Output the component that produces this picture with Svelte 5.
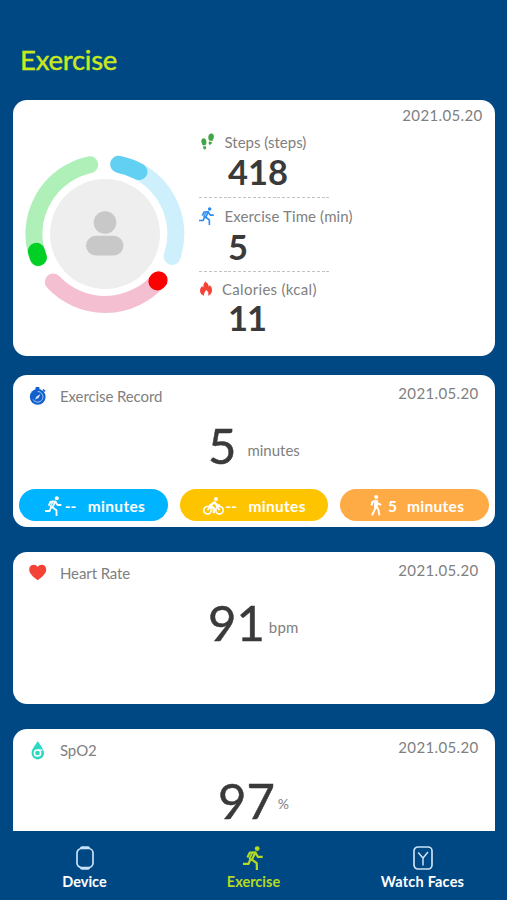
<script>
  const date = '2021.05.20';
  const stats = [
    { icon: 'steps', label: 'Steps (steps)', value: '418' },
    { icon: 'run', label: 'Exercise Time (min)', value: '5' },
    { icon: 'flame', label: 'Calories (kcal)', value: '11' }
  ];
  const pills = [
    { kind: 'run', value: '--' },
    { kind: 'bike', value: '--' },
    { kind: 'walk', value: '5' }
  ];
</script>

{#snippet runner(size)}
  <svg width={size * 0.84} height={size} viewBox="0 0 21 25" fill="none" stroke="currentColor" stroke-width="2.3" stroke-linejoin="round">
    <circle cx="14.800" cy="2.700" r="2.500" fill="currentColor" stroke="none" />
    <path d="M4.600 12 7 7l6-.3-3.700 7.500 5 3.600.2 7.200" />
    <path d="M12.800 7l2.800 4.300h4.900M7.800 13.500 5.800 18.700H0" />
    <path d="M9.500 7.500 6.900 13.200l2.800 1.700" stroke-width="1.800" />
  </svg>
{/snippet}

<main>
  <header><h1>Exercise</h1></header>

  <div class="cards">
    <section class="card summary">
      <svg class="ring" width="162" height="162" viewBox="-81 -81 162 162" fill="none" stroke-width="17" stroke-linecap="round">
        <circle r="55" fill="#eeeeee" />
        <circle cx="0" cy="-11.5" r="11.3" fill="#c8c8c8" />
        <rect x="-19" y="1.8" width="37.5" height="19.6" rx="9.8" fill="#c8c8c8" />
        <path d="M-15.3-69.3A71 71 0 0 0-67 23.8" stroke="#aef0b8" />
        <path d="M-68.6 17.3-66.6 23.5" stroke="#00cf25" />
        <path d="M13.7-69.7A71 71 0 0 1 67.2 22.4" stroke="#cef0fc" />
        <path d="M13.7-69.7A71 71 0 0 1 34-62.4" stroke="#62d0f2" />
        <path d="M-51.7 48A71 71 0 0 0 53 46.8" stroke="#f4bfd0" />
        <path d="M52.4 47.4 53.6 46.2" stroke="#ff0000" stroke-width="18" />
      </svg>
      <div class="stats">
        {#each stats as s}
          <div class="stat {s.icon}">
            <div class="name">
              <span class="glyph">
                {#if s.icon === 'steps'}
                  <svg width="16" height="18" viewBox="-1 0 14 17" fill="#43a647">
                    <path d="M.6 8C.5 6.200 1.400 5 2.800 4.900c1.500 0 2.600 1.500 2.700 3.500 0 1.200-.5 2-.7 3l-2.900.4C1.600 10.500.7 9.400.6 8z" />
                    <path d="M2.200 12.800 5 12.400c.4 1.700.1 3-1 3.200-1.100.1-1.700-1-1.800-2.800z" />
                    <path d="M7.200 4c.1-2 1.300-3.700 3-3.500 1.800.1 2.500 1.700 2.300 3.500-.2 1.400-1 2.300-1.400 3.500L8 7C7.800 6 7.100 5.200 7.200 4z" />
                    <path d="M7.800 8l2.900.5c-.3 1.700-1 2.800-2.100 2.600C7.500 10.900 7.400 9.600 7.800 8z" />
                  </svg>
                {:else if s.icon === 'run'}
                  {@render runner(18)}
                {:else}
                  <svg width="14" height="16" viewBox="0 0 14 16" fill="#f44336">
                    <path d="M6.300.4c3 1.900 3.400 3.800 3.300 5.300.8-.3 1-.9 1-1.600C12.500 5.800 13 7.600 13 9.200c0 2.900-1.600 4.700-3.900 5.500.9-2.500.1-4.300-2.300-5.900.1 2-2.300 2.800-1.600 5.900C2.700 14.100 1 12.300 1 9.500c0-2.400 1.300-3.600 2.500-4.800 0 1 .1 1.500.8 1.900C4.500 4 4.500 2.300 6.300.4z" />
                  </svg>
                {/if}
              </span>
              <span class="label">{s.label}</span>
            </div>
            <div class="num">{s.value}</div>
          </div>
        {/each}
      </div>
      <time>{date}</time>
    </section>

    <section class="card record">
      <div class="top">
        <svg width="18" height="18" viewBox="0 0 18 18">
          <rect x="6.500" y="0" width="4" height="3" rx=".8" fill="#1260cc" />
          <path d="M14 2.500l2 2" stroke="#1260cc" stroke-width="1.600" />
          <circle cx="8.700" cy="9.800" r="7.900" fill="#1260cc" />
          <path d="M8.700 4.500a5.300 5.300 0 1 1-4.600 8" fill="none" stroke="#a9c9f5" stroke-width="1" />
          <path d="M6 12.500l1.500-3 4-2.500-2 4z" fill="#d8e8ff" />
        </svg>
        <span class="title">Exercise Record</span>
        <time>{date}</time>
      </div>
      <div class="reading"><b>5</b><span>minutes</span></div>
      <div class="pills">
        {#each pills as p}
          <div class="pill {p.kind}">
            {#if p.kind === 'run'}
              {@render runner(20)}
            {:else if p.kind === 'bike'}
              <svg width="21" height="18" viewBox="0 0 21 18" fill="none" stroke="#fff" stroke-width="1.600">
                <circle cx="4.500" cy="13.200" r="3.700" />
                <circle cx="16.500" cy="13.200" r="3.700" />
                <circle cx="13" cy="2" r="2" fill="#fff" stroke="none" />
                <path d="M12 4.800 7 8.500l3.800 2.700v5M11.500 5.300l2.300 3h3.400" stroke-width="2.300" stroke-linejoin="round" />
                <path d="M4.500 13.200 7.500 9M16.500 13.200l-3-4.500" />
              </svg>
            {:else}
              <svg width="12" height="21" viewBox="0 0 12 21" fill="none" stroke="#fff" stroke-width="1.900" stroke-linejoin="round">
                <circle cx="6.200" cy="2.100" r="2" fill="#fff" stroke="none" />
                <path d="M1.500 10.500 2.300 7 6 5.600l2.200 3 3 1.300M6 5.500v6.500L2 20.300M6.600 11.500l2 3.600.8 5.200" />
                <path d="M5 6h2v6H5z" fill="#fff" />
              </svg>
            {/if}
            <span class="amount">{p.value}</span>
            <span class="unit">minutes</span>
          </div>
        {/each}
      </div>
    </section>

    <section class="card heart">
      <div class="top">
        <svg width="18" height="17" viewBox="0 0 18 17" fill="#f44336">
          <path d="M8.700 16.200C3.500 12.300.2 9.400.2 5.500.2 2.600 2.300.8 4.600.8c1.700 0 3.200.8 4.100 2.300C9.600 1.600 11.100.8 12.800.8c2.300 0 4.400 1.800 4.400 4.700 0 3.900-3.300 6.800-8.500 10.700z" />
        </svg>
        <span class="title">Heart Rate</span>
        <time>{date}</time>
      </div>
      <div class="reading"><b>91</b><span>bpm</span></div>
    </section>

    <section class="card spo">
      <div class="top">
        <svg width="18" height="19" viewBox="0 0 18 19">
          <path d="M8.800 0c2.200 4.300 6.200 7.900 6.200 12.100 0 3.600-2.700 6.300-6.200 6.300s-6.200-2.700-6.200-6.300C2.600 7.900 6.600 4.300 8.800 0z" fill="#2ed9c3" />
          <circle cx="8.500" cy="12" r="3.100" fill="none" stroke="#fff" stroke-width="1.500" />
          <path d="M9 9h4.500" stroke="#fff" stroke-width="1.200" />
        </svg>
        <span class="title">SpO2</span>
        <time>{date}</time>
      </div>
      <div class="reading"><b>97</b><span>%</span></div>
    </section>
  </div>

  <nav>
    <div class="tab">
      <svg width="20" height="24" viewBox="0 0 20 24" fill="none" stroke="#c9e1f6" stroke-width="1.700">
        <rect x="2" y="2.500" width="16" height="19" rx="4.500" />
        <path d="M5.500 2.200 7 1.200h6l1.500 1M5.500 21.800l1.500 1h6l1.500-1" stroke-width="2" />
      </svg>
      <span>Device</span>
    </div>
    <div class="tab active">
      {@render runner(24)}
      <span>Exercise</span>
    </div>
    <div class="tab faces">
      <svg width="20" height="24" viewBox="0 0 20 24" fill="none" stroke="#c9e1f6" stroke-width="1.700">
        <rect x="1" y="1" width="18" height="22" rx="4" />
        <path d="M5.200 6.500l4.800 5.500 5-6M10 12v7.500" stroke-width="1.500" />
      </svg>
      <span>Watch Faces</span>
    </div>
  </nav>
</main>

<style>
  :global(body) { margin: 0; background: #004884; }
  main {
    width: 507px;
    height: 900px;
    box-sizing: border-box;
    display: flex;
    flex-direction: column;
    overflow: hidden;
    background: #004884;
    color: #808080;
    font-family: Lato, 'Liberation Sans', sans-serif;
    font-size: 15px;
  }
  svg { display: block; flex: none; }
  header { height: 100px; flex: none; box-sizing: border-box; padding: 43px 0 0 20px; }
  h1 {
    margin: 0;
    font-size: 27.5px;
    line-height: 34px;
    font-weight: 400;
    letter-spacing: -0.25px;
    color: #c9e81e;
    -webkit-text-stroke: 0.4px #c9e81e;
  }
  .cards { height: 731px; flex: none; overflow: hidden; padding: 0 12.5px 0 13px; }
  .card { background: #fff; border-radius: 14px; box-sizing: border-box; }
  time { margin-left: auto; font-size: 15px; line-height: 20px; letter-spacing: 0.35px; white-space: nowrap; }

  .summary { display: flex; align-items: flex-start; height: 256px; margin-bottom: 19px; padding: 5px 12px 0 11px; }
  .ring { margin-top: 48px; }
  .stats { width: 130px; margin: 19px 0 0 13px; }
  .stat {
    height: 74px;
    box-sizing: border-box;
    padding-top: 8px;
    background: repeating-linear-gradient(90deg, #c4c4c4 0 3px, transparent 3px 4.900px) left bottom / 100% 1px no-repeat;
  }
  .stat.flame { background: none; padding-top: 7px; }
  .name { display: flex; align-items: center; height: 20px; white-space: nowrap; }
  .glyph { width: 25.500px; flex: none; }
  .stat.run .glyph { color: #2a8df2; }
  .run .label { letter-spacing: 0.12px; }
  .flame .glyph { width: 23px; }
  .flame .label { letter-spacing: 0.3px; }
  .num {
    height: 40px;
    line-height: 40px;
    padding-left: 29px;
    font-size: 34.500px;
    font-weight: 700;
    color: #3a3a3a;
  }
  .run .num { line-height: 42px; }
  .flame .num { line-height: 37px; letter-spacing: -1px; }

  .top { display: flex; align-items: flex-start; padding: 11px 16px 0 16px; height: 32px; }
  .top svg { margin-top: 1px; }
  .title { margin: 0 0 0 13px; line-height: 20px; letter-spacing: -0.1px; }
  .top time { margin-top: -3px; }
  .record { height: 152px; margin-bottom: 25px; }
  .heart { height: 152px; margin-bottom: 25px; }
  .spo { height: 152px; }
  .reading { display: flex; align-items: flex-start; height: 63px; margin-top: -3px; padding-left: 195px; line-height: 60px; }
  .reading b { font-size: 49px; font-weight: 400; color: #3a3a3a; -webkit-text-stroke: 0.5px #3a3a3a; }
  .reading span { margin: 5px 0 0 11px; }
  .heart .reading span { margin-left: 4px; letter-spacing: 0.2px; }
  .spo .reading { padding-left: 205px; margin-top: -2px; }
  .spo .reading span { margin: 4px 0 0 3px; font-size: 14px; }

  .pills { display: flex; gap: 12px; padding: 11px 6px 0; }
  .pill {
    width: 148.500px;
    height: 32px;
    box-sizing: border-box;
    display: flex;
    align-items: center;
    padding: 1px 0 0 26px;
    border-radius: 16px;
    color: #fff;
    font-weight: 700;
    font-size: 15.500px;
    white-space: pre;
  }
  .pill.run { background: #00b4ff; }
  .pill.bike { background: #ffc400; padding-left: 23px; }
  .pill.walk { background: #ffab45; padding-left: 30px; }
  .amount { margin-left: 3px; width: 23px; }
  .unit { letter-spacing: 0.3px; }
  .pill.bike .amount { margin-left: 2px; }
  .walk .amount { margin-left: 6px; width: 19px; }

  nav { display: flex; flex: 1; }
  .tab {
    width: 169px;
    display: flex;
    flex-direction: column;
    align-items: center;
    padding-top: 15px;
    color: #fff;
    font-size: 14.500px;
    font-weight: 700;
    line-height: 18px;
  }
  .tab span { margin-top: 3px; }
  .faces span { letter-spacing: 0.2px; }
  .tab.active { color: #b5da22; }
</style>
